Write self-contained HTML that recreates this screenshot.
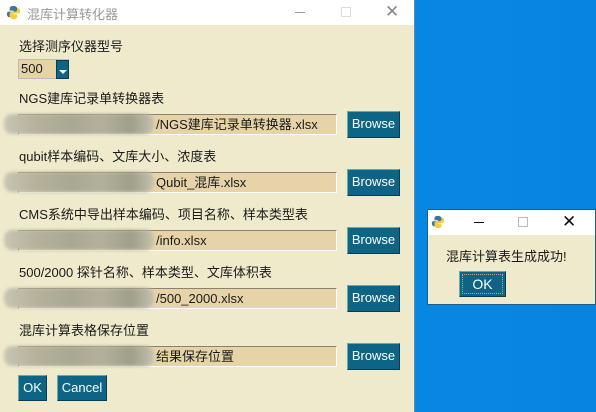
<!DOCTYPE html>
<html><head><meta charset="utf-8"><style>
*{margin:0;padding:0;box-sizing:border-box}
body{width:596px;height:412px;overflow:hidden;background:linear-gradient(90deg,#0a8ee6,#0784e0);position:relative;font-family:"Liberation Sans","Noto Sans CJK SC",sans-serif;font-size:13px;color:#1a1a1a}
.win{position:absolute;left:0;top:0;width:415px;height:412px;background:#eeeacb;border-right:1px solid #5a8fb8}
.tb{position:absolute;left:0;top:0;right:0;height:25px;background:#fff}
.tt{position:absolute;left:27px;top:4px;color:#999;font-size:13px}
.lbl{position:absolute;left:19px;font-size:13px}
.ent{position:absolute;left:18px;width:319px;height:21px;background:#e6d4a8;border-top:1px solid #8a8270;border-left:1px solid #8a8270;border-bottom:1px solid #fff;border-right:1px solid #fff;padding-left:137px;line-height:19px;font-size:13px}
.blur{position:absolute;left:4px;width:150px;height:20px;background:linear-gradient(90deg,#c8c6b4,#b5b39c 20%,#a9a892 45%,#b3b19b 65%,#9f9f8a 85%,#c4c2ae);filter:blur(1.5px);border-radius:8px}
.btn{position:absolute;background:#0e6484;color:#fff;border:1px solid #0a3c52;border-top-color:#6aa;border-left-color:#6aa;font-size:13px;text-align:center;line-height:24px}
.dlg{position:absolute;left:427px;top:209px;width:169px;height:96px;background:#eeeacb;border:1px solid #1c5f8a}
</style></head><body>
<div class="win">
<div class="tb">
<svg style="position:absolute;left:6px;top:5px" width="15" height="15" viewBox="0 0 16 16"><path d="M8 1C4 1 4 3 4 4v2h4v1H3C1 7 1 9 1 10s1 3 2 3h1v-2c0-1 1-2 2-2h4c1 0 2-1 2-2V4c0-2-2-3-4-3z" fill="#3b74a8"/><path d="M8 15c4 0 4-2 4-3v-2H8V9h5c2 0 2-2 2-3s-1-3-2-3h-1v2c0 1-1 2-2 2H6C5 7 4 8 4 9v3c0 2 2 3 4 3z" fill="#f5cc3a"/></svg>
<div class="tt">混库计算转化器</div>
<div style="position:absolute;left:295px;top:12px;width:10px;height:1px;background:#999"></div>
<div style="position:absolute;left:341px;top:7px;width:10px;height:10px;border:1px solid #ddd"></div>
<div style="position:absolute;left:385px;top:2px;color:#888;font-size:17px">✕</div>
</div>
<div class="lbl" style="top:36px">选择测序仪器型号</div>
<div style="position:absolute;left:18px;top:59px;width:51px;height:20px;background:#e6d4a8;border:1px solid #bbb;line-height:18px;padding-left:2px">500</div>
<div style="position:absolute;left:56px;top:60px;width:13px;height:19px;background:#0e6484;border:1px solid #0a3c52"><div style="position:absolute;left:2px;top:9px;border-left:4px solid transparent;border-right:4px solid transparent;border-top:4px solid #fff"></div></div>
<div class="lbl" style="top:88px">NGS建库记录单转换器表</div>
<div class="ent" style="top:114px">/NGS建库记录单转换器.xlsx</div><div class="blur" style="top:114px"></div>
<div class="btn" style="left:347px;top:111px;width:53px;height:27px">Browse</div>
<div class="lbl" style="top:146px">qubit样本编码、文库大小、浓度表</div>
<div class="ent" style="top:172px">Qubit_混库.xlsx</div><div class="blur" style="top:172px"></div>
<div class="btn" style="left:347px;top:169px;width:53px;height:27px">Browse</div>
<div class="lbl" style="top:204px">CMS系统中导出样本编码、项目名称、样本类型表</div>
<div class="ent" style="top:230px">/info.xlsx</div><div class="blur" style="top:230px"></div>
<div class="btn" style="left:347px;top:227px;width:53px;height:27px">Browse</div>
<div class="lbl" style="top:262px">500/2000 探针名称、样本类型、文库体积表</div>
<div class="ent" style="top:288px">/500_2000.xlsx</div><div class="blur" style="top:288px"></div>
<div class="btn" style="left:347px;top:285px;width:53px;height:27px">Browse</div>
<div class="lbl" style="top:320px">混库计算表格保存位置</div>
<div class="ent" style="top:346px">结果保存位置</div><div class="blur" style="top:346px"></div>
<div class="btn" style="left:347px;top:343px;width:53px;height:27px">Browse</div>
<div class="btn" style="left:18px;top:375px;width:29px;height:26px">OK</div>
<div class="btn" style="left:57px;top:375px;width:50px;height:26px">Cancel</div>
</div>
<div class="dlg">
<div style="position:absolute;left:0;top:0;right:0;height:25px;background:#fff">
<svg style="position:absolute;left:3px;top:5px" width="14" height="14" viewBox="0 0 16 16"><path d="M8 1C4 1 4 3 4 4v2h4v1H3C1 7 1 9 1 10s1 3 2 3h1v-2c0-1 1-2 2-2h4c1 0 2-1 2-2V4c0-2-2-3-4-3z" fill="#3b74a8"/><path d="M8 15c4 0 4-2 4-3v-2H8V9h5c2 0 2-2 2-3s-1-3-2-3h-1v2c0 1-1 2-2 2H6C5 7 4 8 4 9v3c0 2 2 3 4 3z" fill="#f5cc3a"/></svg>
<div style="position:absolute;left:46px;top:12px;width:10px;height:1px;background:#111"></div>
<div style="position:absolute;left:90px;top:7px;width:10px;height:10px;border:1px solid #bbb"></div>
<div style="position:absolute;left:134px;top:2px;color:#111;font-size:17px">✕</div>
</div>
<div style="position:absolute;left:18px;top:36px;font-size:13px">混库计算表生成成功!</div>
<div class="btn" style="left:31px;top:61px;width:47px;height:26px;outline:1px dotted #f88;outline-offset:-4px;font-size:14px">OK</div>
</div>
</body></html>
